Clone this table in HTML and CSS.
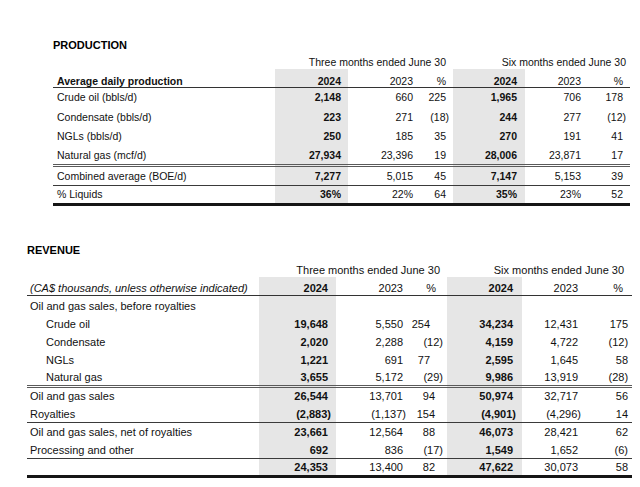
FILE: index.html
```html
<!DOCTYPE html>
<html>
<head>
<meta charset="utf-8">
<link rel="stylesheet" href="styles.css">
</head>
<body>
<div class="page">
  <section class="prod">
    <h2 class="title">PRODUCTION</h2>
    <table class="tbl tbl-prod">
      <colgroup>
        <col class="w-label"><col class="w1"><col class="w2"><col class="w3"><col class="w4"><col class="w5"><col class="w6">
      </colgroup>
      <tbody>
      <tr class="period">
        <td></td>
        <td colspan="3" class="per-three">Three months ended June 30</td>
        <td colspan="3" class="per-six">Six months ended June 30</td>
      </tr>
      <tr class="head">
        <td class="label strong">Average daily production</td>
        <td class="sh strong">2024</td><td>2023</td><td>%</td>
        <td class="sh strong">2024</td><td>2023</td><td>%</td>
      </tr>
      <tr class="first"><td class="label">Crude oil (bbls/d)</td><td class="sh strong">2,148</td><td>660</td><td>225</td><td class="sh strong">1,965</td><td>706</td><td>178</td></tr>
      <tr><td class="label">Condensate (bbls/d)</td><td class="sh strong">223</td><td>271</td><td><span class="neg">(18)</span></td><td class="sh strong">244</td><td>277</td><td><span class="neg">(12)</span></td></tr>
      <tr><td class="label">NGLs (bbls/d)</td><td class="sh strong">250</td><td>185</td><td>35</td><td class="sh strong">270</td><td>191</td><td>41</td></tr>
      <tr class="dbl"><td class="label">Natural gas (mcf/d)</td><td class="sh strong">27,934</td><td>23,396</td><td>19</td><td class="sh strong">28,006</td><td>23,871</td><td>17</td></tr>
      <tr class="line"><td class="label">Combined average (BOE/d)</td><td class="sh strong">7,277</td><td>5,015</td><td>45</td><td class="sh strong">7,147</td><td>5,153</td><td>39</td></tr>
      <tr class="thick"><td class="label">% Liquids</td><td class="sh strong">36%</td><td>22%</td><td>64</td><td class="sh strong">35%</td><td>23%</td><td>52</td></tr>
      </tbody>
    </table>
  </section>

  <section class="rev">
    <h2 class="title">REVENUE</h2>
    <table class="tbl tbl-rev">
      <colgroup>
        <col class="w-label"><col class="w1"><col class="w2"><col class="w3"><col class="w4"><col class="w5"><col class="w6">
      </colgroup>
      <tbody>
      <tr class="period">
        <td></td>
        <td colspan="3" class="per-three">Three months ended June 30</td>
        <td colspan="3" class="per-six">Six months ended June 30</td>
      </tr>
      <tr class="head">
        <td class="label note">(CA$ thousands, unless otherwise indicated)</td>
        <td class="sh strong">2024</td><td>2023</td><td class="pct-h">%</td>
        <td class="sh strong">2024</td><td>2023</td><td class="pct-h6">%</td>
      </tr>
      <tr class="first"><td class="label">Oil and gas sales, before royalties</td><td class="sh"></td><td></td><td></td><td class="sh"></td><td></td><td></td></tr>
      <tr><td class="label indent">Crude oil</td><td class="sh strong">19,648</td><td>5,550</td><td class="pa">254</td><td class="sh strong">34,234</td><td>12,431</td><td>175</td></tr>
      <tr><td class="label indent">Condensate</td><td class="sh strong">2,020</td><td>2,288</td><td>(12)</td><td class="sh strong">4,159</td><td>4,722</td><td>(12)</td></tr>
      <tr><td class="label indent">NGLs</td><td class="sh strong">1,221</td><td>691</td><td class="pa">77</td><td class="sh strong">2,595</td><td>1,645</td><td>58</td></tr>
      <tr class="dbl"><td class="label indent">Natural gas</td><td class="sh strong">3,655</td><td>5,172</td><td>(29)</td><td class="sh strong">9,986</td><td>13,919</td><td>(28)</td></tr>
      <tr><td class="label">Oil and gas sales</td><td class="sh strong">26,544</td><td>13,701</td><td class="pb">94</td><td class="sh strong">50,974</td><td>32,717</td><td>56</td></tr>
      <tr class="line"><td class="label">Royalties</td><td class="sh strong"><span class="neg">(2,883)</span></td><td><span class="neg">(1,137)</span></td><td class="pb">154</td><td class="sh strong"><span class="neg">(4,901)</span></td><td><span class="neg">(4,296)</span></td><td>14</td></tr>
      <tr><td class="label">Oil and gas sales, net of royalties</td><td class="sh strong">23,661</td><td>12,564</td><td class="pb">88</td><td class="sh strong">46,073</td><td>28,421</td><td>62</td></tr>
      <tr class="line"><td class="label">Processing and other</td><td class="sh strong">692</td><td>836</td><td>(17)</td><td class="sh strong">1,549</td><td>1,652</td><td>(6)</td></tr>
      <tr class="thick"><td class="label"></td><td class="sh strong">24,353</td><td>13,400</td><td class="pb">82</td><td class="sh strong">47,622</td><td>30,073</td><td>58</td></tr>
      </tbody>
    </table>
  </section>
</div>
</body>
</html>
```

FILE: styles.css
```css
html, body {
  margin: 0;
  padding: 0;
  background: #ffffff;
}

body {
  font-family: "Liberation Sans", Arial, Helvetica, sans-serif;
  color: #111111;
}

.page {
  padding-top: 38px;
}

.title {
  margin: 0;
  font-size: 11px;
  line-height: 14px;
  font-weight: bold;
  color: #000;
}

.prod {
  margin-left: 53px;
  width: 577px;
}

.rev {
  margin-left: 27px;
  width: 605px;
  margin-top: 37px;
}

.tbl {
  border-collapse: collapse;
  table-layout: fixed;
  width: 100%;
}

.tbl td {
  padding: 0 7px 0 0;
  text-align: right;
  white-space: nowrap;
  vertical-align: middle;
}

.tbl td.label {
  text-align: left;
  padding-left: 4px;
  padding-right: 0;
}

.tbl .strong {
  font-weight: bold;
}

.tbl td.sh {
  background: #e6e6e6;
}

.neg {
  margin-right: -3px;
}

/* production table */
.tbl-prod {
  margin-top: 3px;
  font-size: 10.5px;
  line-height: 12px;
}

.tbl-prod .w-label { width: 222px; }
.tbl-prod .w1 { width: 73px; }
.tbl-prod .w2 { width: 72px; }
.tbl-prod .w3 { width: 33px; }
.tbl-prod .w4 { width: 72px; }
.tbl-prod .w5 { width: 63px; }
.tbl-prod .w6 { width: 42px; }

.tbl-prod tr { height: 19.5px; }
.tbl-prod tr.period { height: 14px; }
.tbl-prod tr.period td { vertical-align: bottom; padding-bottom: 1px; }
.tbl-prod tr.head { height: 18px; }
.tbl-prod tr.head td { vertical-align: bottom; }
.tbl-prod tr.first { height: 20px; }
.tbl-prod td.per-six { padding-right: 4px; }
.tbl-prod td:nth-child(5) { padding-right: 8px; }

/* revenue table */
.tbl-rev {
  margin-top: 6px;
  font-size: 11px;
  line-height: 13px;
}

.tbl-rev .w-label { width: 232px; }
.tbl-rev .w1 { width: 77px; }
.tbl-rev .w2 { width: 75px; }
.tbl-rev .w3 { width: 36px; }
.tbl-rev .w4 { width: 75px; }
.tbl-rev .w5 { width: 64px; }
.tbl-rev .w6 { width: 46px; }

.tbl-rev tr { height: 18px; }
.tbl-rev tr.period { height: 14px; }
.tbl-rev tr.period td { vertical-align: bottom; }
.tbl-rev tr.head { height: 18px; }
.tbl-rev tr td { vertical-align: bottom; padding-bottom: 1px; }
.tbl-rev tr.head td { padding-bottom: 0; }
.tbl-rev tr.period td { padding-bottom: 0; }
.tbl-rev td.label { padding-left: 3px; }
.tbl-rev td.indent { padding-left: 19px; }
.tbl-rev td.note { font-style: italic; }
.tbl-rev td.per-six { padding-right: 8px; }
.tbl-rev td:nth-child(2) { padding-right: 8px; }
.tbl-rev td:nth-child(3) { padding-right: 8px; }
.tbl-rev td:nth-child(4) { padding-right: 4px; }
.tbl-rev td:nth-child(5) { padding-right: 9px; }
.tbl-rev td:nth-child(6) { padding-right: 8px; }
.tbl-rev td:nth-child(7) { padding-right: 4px; }
.tbl-rev td.pa { padding-right: 17px; }
.tbl-rev td.pb { padding-right: 12px; }
.tbl-rev td.pct-h { padding-right: 11px; }
.tbl-rev td.pct-h6 { padding-right: 9px; }
.tbl-rev td.per-three { padding-right: 7px; }
.tbl-rev tr.first { height: 19px; }

/* rules */
.tbl tr.head td { border-bottom: 1px solid #333333; }
.tbl tr.line td { border-bottom: 1px solid #3a3a3a; }
.tbl tr.dbl td { border-bottom: 3px double #5a5a5a; }
.tbl tr.thick td { border-bottom: 3px solid #151515; }
```
